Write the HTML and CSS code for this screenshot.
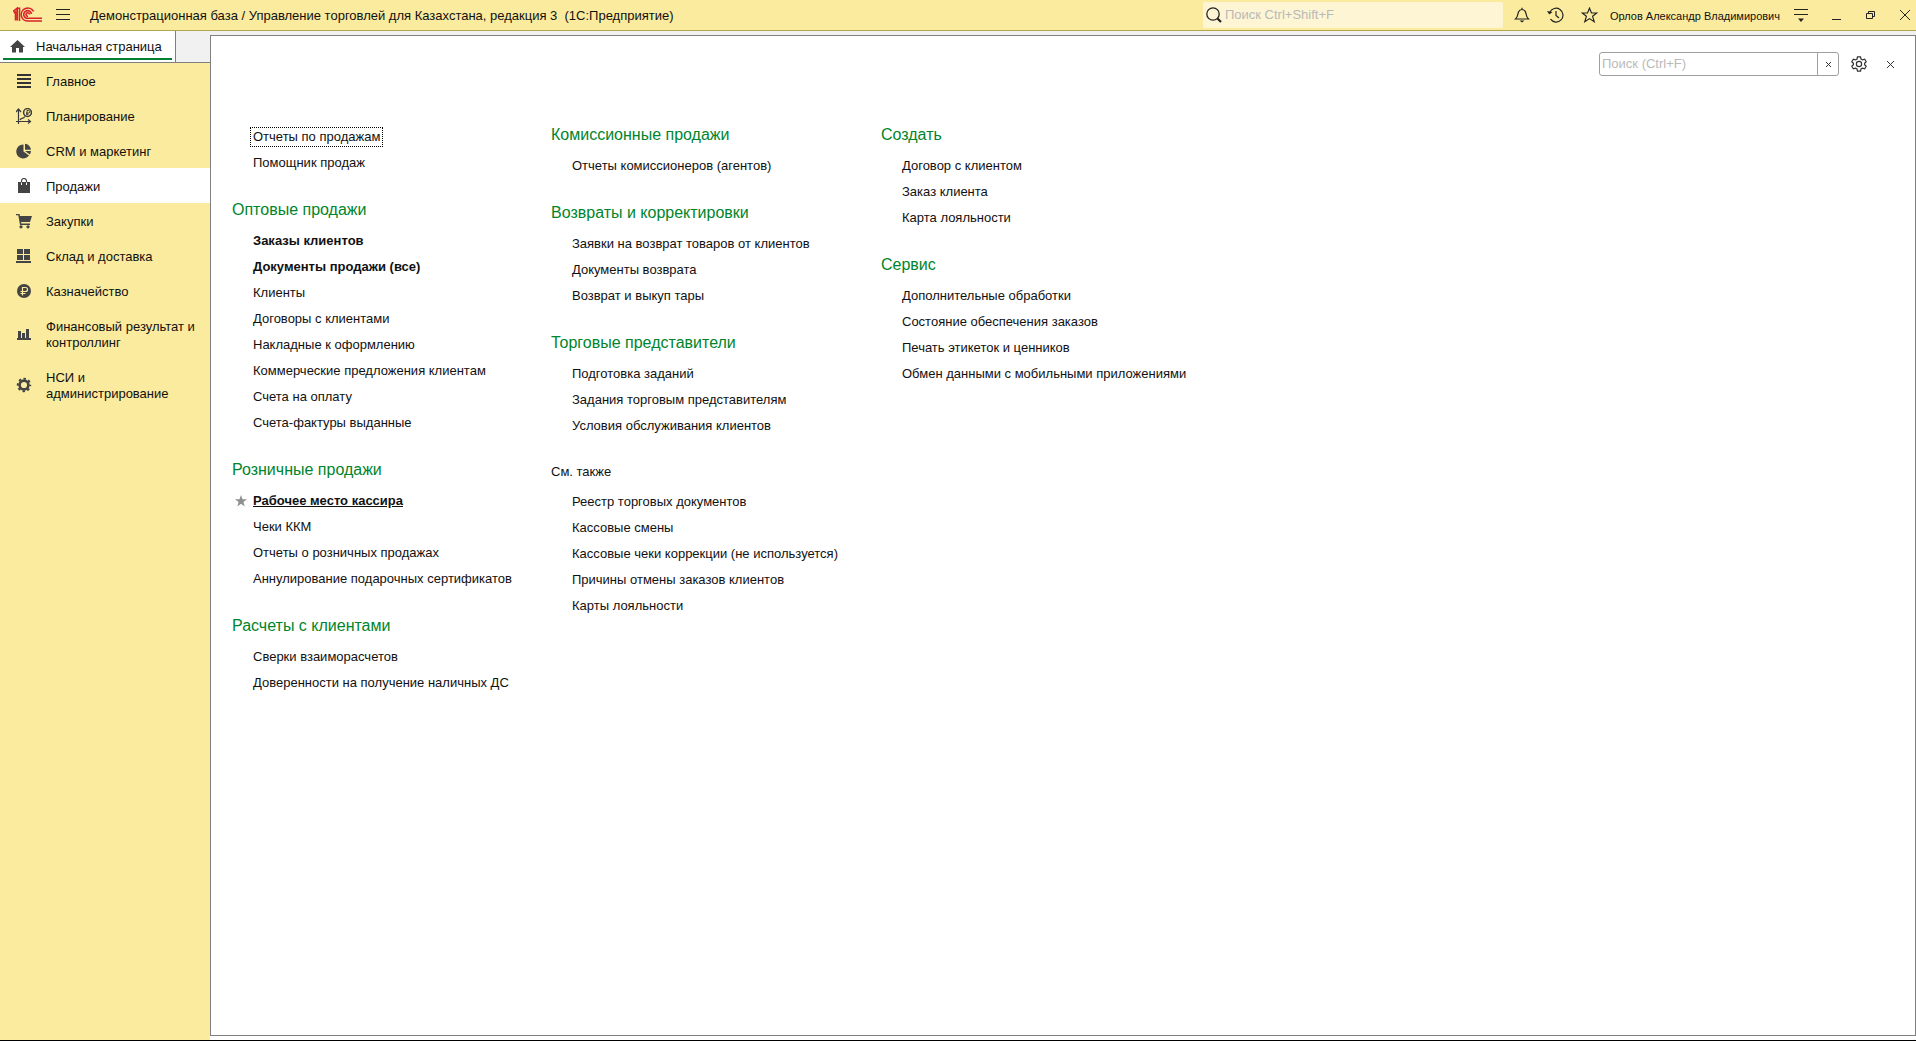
FILE: index.html
```html
<!DOCTYPE html>
<html lang="ru">
<head>
<meta charset="utf-8">
<title>Управление торговлей для Казахстана</title>
<link rel="stylesheet" href="styles.css">
</head>
<body>
<div class="app">
  <header class="titlebar">
    <svg class="logo" width="29" height="16" viewBox="0 0 29 16" fill="none" stroke="#d8232a" stroke-width="1.600"><path d="M0 4.500L4.200 1.200V13.500M1 6L2.500 5V13.500M4.200 1.200H6.500V14"/><path d="M20.500 4.500A6.500 6.500 0 1 0 15.500 14H29"/><path d="M18.500 7A3.900 3.900 0 1 0 15.500 11.300H29"/><path d="M16.500 7.500A1.700 1.700 0 1 0 15 9.200"/></svg>
    <button class="icon-btn burger" aria-label="Меню"><svg width="14" height="12" viewBox="0 0 14 12" stroke="#222" fill="none"><path d="M0 .5H14M0 5.500H14M0 10.500H14"/></svg></button>
    <h1 class="title">Демонстрационная база / Управление торговлей для Казахстана, редакция 3&nbsp; (1С:Предприятие)</h1>
    <label class="top-search">
      <svg width="16" height="16" viewBox="0 0 16 16" fill="none" stroke="#222"><circle cx="7" cy="7" r="6.200" stroke-width="1.300"/><path d="M11.500 11.500L15 15" stroke-width="2.200"/></svg>
      <input type="text" placeholder="Поиск Ctrl+Shift+F" aria-label="Поиск">
    </label>
    <div class="tools">
      <button class="icon-btn" aria-label="Уведомления"><svg width="16" height="16" viewBox="0 0 16 16" fill="none" stroke="#222" stroke-width="1.200"><path d="M1.500 12H14.500C12 10 12.500 7.500 11.500 5C10.800 3.300 9.500 2.500 8 2.500S5.200 3.300 4.500 5C3.500 7.500 4 10 1.500 12Z"/><path d="M8 .8V2.500"/><path d="M5.500 13.500H10.500L8 15.500Z" fill="#222" stroke="none"/></svg></button>
      <button class="icon-btn" aria-label="История"><svg width="17" height="16" viewBox="0 0 17 16" fill="none" stroke="#222" stroke-width="1.200"><path d="M2.800 5.300A6.900 6.900 0 1 1 3.500 12.200"/><path d="M0 4L2.300 7.500L5.500 5Z" fill="#222" stroke="none"/><path d="M9 4V8.500L12 11"/></svg></button>
      <button class="icon-btn" aria-label="Избранное"><svg width="17" height="16" viewBox="0 0 17 16" fill="none" stroke="#222" stroke-width="1.200"><path d="M8.500 1.200L10.500 6H15.800L11.600 9.300L13.200 14.700L8.500 11.600L3.800 14.700L5.400 9.300L1.200 6H6.500Z"/></svg></button>
    </div>
    <span class="user">Орлов Александр Владимирович</span>
    <div class="window-buttons">
      <button class="icon-btn" aria-label="Настройки окна"><svg width="14" height="14" viewBox="0 0 14 14" stroke="#222" fill="none"><path d="M0 1.500H14M0 6.500H14" stroke-width="1.200"/><path d="M4 10.500H10L7 14Z" fill="#222" stroke="none"/></svg></button>
      <button class="icon-btn" aria-label="Свернуть"><svg width="10" height="10" viewBox="0 0 10 10" stroke="#222"><path d="M0 9.500H9"/></svg></button>
      <button class="icon-btn" aria-label="Восстановить"><svg width="10" height="10" viewBox="0 0 10 10" stroke="#222" fill="none"><path d="M.5 3.500H6.500V8.500H.5ZM2.500 3V1.500H8.500V6.500H7"/></svg></button>
      <button class="icon-btn" aria-label="Закрыть"><svg width="10" height="10" viewBox="0 0 10 10" stroke="#222"><path d="M0 0L10 10M10 0L0 10"/></svg></button>
    </div>
  </header>

  <div class="body">
    <div class="left">
      <div class="tabs">
        <a class="tab" href="#home"><svg width="15" height="13" viewBox="0 0 15 13" fill="#444"><path d="M7.500 0L15 7H13V12.500H9V8H6V12.500H2V7H0Z"/></svg><span>Начальная страница</span></a>
      </div>
      <nav class="sections" aria-label="Разделы">
        <a class="section" href="#main"><svg width="16" height="16" viewBox="0 0 16 16" stroke="#333" stroke-width="2"><path d="M1 2H15M1 6H15M1 10H15M1 14H15"/></svg><span>Главное</span></a>
        <a class="section" href="#plan"><svg width="16" height="16" viewBox="0 0 16 16" fill="none" stroke="#3a3a3a" stroke-width="1.200"><path d="M2.500 16V1.500M0 4L2.500 1L5 4M0 13.500H14M12 11.500L14.500 13.500L12 15.500M4 12C5 9.500 7 11.500 9 8.500"/><circle cx="11.500" cy="4.500" r="3.900" stroke-width="1.500"/><path d="M11 7V2.500H12.600A1.200 1.200 0 0 1 12.600 5H10M10 6.200H12.500" stroke-width="1"/></svg><span>Планирование</span></a>
        <a class="section" href="#crm"><svg width="16" height="16" viewBox="0 0 16 16" fill="#444"><path d="M7.500 1.500V8.500L13 12.500A7 7 0 1 1 7.500 1.500Z"/><path d="M9 .8A6.500 6.500 0 0 1 15 6.800H9Z"/><path d="M9 8H15A6.500 6.500 0 0 1 13.800 11.500Z"/></svg><span>CRM и маркетинг</span></a>
        <a class="section current" href="#sales"><svg width="16" height="16" viewBox="0 0 16 16"><path d="M2 4H14V15H2Z" fill="#444"/><path d="M5.500 6.500V3A2.500 2.500 0 0 1 10.500 3V6.500" fill="none" stroke="#444" stroke-width="1.200"/><path d="M5.500 4.500V7M10.500 4.500V7" stroke="#fff"/></svg><span>Продажи</span></a>
        <a class="section" href="#purchases"><svg width="16" height="16" viewBox="0 0 16 16" fill="#444"><path d="M0 1H3.500L4 3H16L14 9H5L5.300 10.500H14V12H4L2.300 2.300H0Z"/><circle cx="5" cy="13.800" r="1.600"/><circle cx="12" cy="13.800" r="1.600"/></svg><span>Закупки</span></a>
        <a class="section" href="#stock"><svg width="16" height="16" viewBox="0 0 16 16" fill="#444"><path d="M1 1H7V6H1ZM8 1H14V6H8ZM1 7H7V12H1ZM8 7H14V12H8ZM0 13H15V15H0Z"/></svg><span>Склад и доставка</span></a>
        <a class="section" href="#treasury"><svg width="16" height="16" viewBox="0 0 16 16"><circle cx="8" cy="8" r="7" fill="#444"/><path d="M6.500 12.500V4.500H9.500A2 2 0 0 1 9.500 8.500H4.500M4.500 10.500H9.500" fill="none" stroke="#fbeb9e" stroke-width="1.200"/></svg><span>Казначейство</span></a>
        <a class="section" href="#finance"><svg width="16" height="16" viewBox="0 0 16 16" fill="#444"><path d="M2 5H5V12H2ZM6 7H9V12H6ZM10 3H13V12H10ZM1 12H15V14H1Z"/></svg><span>Финансовый результат и контроллинг</span></a>
        <a class="section" href="#admin"><svg width="16" height="16" viewBox="0 0 16 16" fill="none" stroke="#444"><circle cx="8" cy="8" r="4.400" stroke-width="2.600"/><circle cx="8" cy="8" r="6.200" stroke-width="2" stroke-dasharray="2.430 2.430" stroke-dashoffset="1.200"/></svg><span>НСИ и администрирование</span></a>
      </nav>
    </div>

    <main class="panel">
      <div class="panel-tools">
        <div class="find">
          <input type="text" placeholder="Поиск (Ctrl+F)" aria-label="Поиск по командам">
          <button aria-label="Очистить"><svg width="5" height="5" viewBox="0 0 5 5" stroke="#333"><path d="M0 0L5 5M5 0L0 5"/></svg></button>
        </div>
        <button class="icon-btn" aria-label="Настройка"><svg width="16" height="16" viewBox="0 0 16 16" fill="none" stroke="#333" stroke-width="1.200"><circle cx="8" cy="8" r="2.600"/><path d="M6.500 .8H9.500L10 3L11.500 3.900L13.700 3.200L15.200 5.800L13.600 7.200V8.800L15.200 10.200L13.700 12.800L11.500 12.100L10 13L9.500 15.200H6.500L6 13L4.500 12.100L2.300 12.800L.8 10.200L2.400 8.800V7.200L.8 5.800L2.300 3.200L4.500 3.900L6 3Z"/></svg></button>
        <button class="icon-btn" aria-label="Закрыть панель"><svg width="7" height="7" viewBox="0 0 7 7" stroke="#333"><path d="M0 0L7 7M7 0L0 7"/></svg></button>
      </div>

      <div class="columns">
        <div class="column">
          <section class="group untitled">
            <ul>
              <li><a class="focused" href="#c1">Отчеты по продажам</a></li>
              <li><a href="#c2">Помощник продаж</a></li>
            </ul>
          </section>
          <section class="group">
            <h2>Оптовые продажи</h2>
            <ul>
              <li><a class="strong" href="#c3">Заказы клиентов</a></li>
              <li><a class="strong" href="#c4">Документы продажи (все)</a></li>
              <li><a href="#c5">Клиенты</a></li>
              <li><a href="#c6">Договоры с клиентами</a></li>
              <li><a href="#c7">Накладные к оформлению</a></li>
              <li><a href="#c8">Коммерческие предложения клиентам</a></li>
              <li><a href="#c9">Счета на оплату</a></li>
              <li><a href="#c10">Счета-фактуры выданные</a></li>
            </ul>
          </section>
          <section class="group">
            <h2>Розничные продажи</h2>
            <ul>
              <li class="starred"><svg class="star" width="12" height="12" viewBox="0 0 12 12" fill="#8f8f8f"><path d="M6 0L7.500 4.200H12L8.400 7L9.700 11.500L6 8.800L2.300 11.500L3.600 7L0 4.200H4.500Z"/></svg><a class="strong underlined" href="#c11">Рабочее место кассира</a></li>
              <li><a href="#c12">Чеки ККМ</a></li>
              <li><a href="#c13">Отчеты о розничных продажах</a></li>
              <li><a href="#c14">Аннулирование подарочных сертификатов</a></li>
            </ul>
          </section>
          <section class="group">
            <h2>Расчеты с клиентами</h2>
            <ul>
              <li><a href="#c15">Сверки взаиморасчетов</a></li>
              <li><a href="#c16">Доверенности на получение наличных ДС</a></li>
            </ul>
          </section>
        </div>

        <div class="column">
          <section class="group">
            <h2>Комиссионные продажи</h2>
            <ul>
              <li><a href="#c17">Отчеты комиссионеров (агентов)</a></li>
            </ul>
          </section>
          <section class="group">
            <h2>Возвраты и корректировки</h2>
            <ul>
              <li><a href="#c18">Заявки на возврат товаров от клиентов</a></li>
              <li><a href="#c19">Документы возврата</a></li>
              <li><a href="#c20">Возврат и выкуп тары</a></li>
            </ul>
          </section>
          <section class="group">
            <h2>Торговые представители</h2>
            <ul>
              <li><a href="#c21">Подготовка заданий</a></li>
              <li><a href="#c22">Задания торговым представителям</a></li>
              <li><a href="#c23">Условия обслуживания клиентов</a></li>
            </ul>
          </section>
          <section class="group">
            <h2 class="also">См. также</h2>
            <ul>
              <li><a href="#c24">Реестр торговых документов</a></li>
              <li><a href="#c25">Кассовые смены</a></li>
              <li><a href="#c26">Кассовые чеки коррекции (не используется)</a></li>
              <li><a href="#c27">Причины отмены заказов клиентов</a></li>
              <li><a href="#c28">Карты лояльности</a></li>
            </ul>
          </section>
        </div>

        <div class="column">
          <section class="group">
            <h2>Создать</h2>
            <ul>
              <li><a href="#c29">Договор с клиентом</a></li>
              <li><a href="#c30">Заказ клиента</a></li>
              <li><a href="#c31">Карта лояльности</a></li>
            </ul>
          </section>
          <section class="group">
            <h2>Сервис</h2>
            <ul>
              <li><a href="#c32">Дополнительные обработки</a></li>
              <li><a href="#c33">Состояние обеспечения заказов</a></li>
              <li><a href="#c34">Печать этикеток и ценников</a></li>
              <li><a href="#c35">Обмен данными с мобильными приложениями</a></li>
            </ul>
          </section>
        </div>
      </div>
    </main>
  </div>
</div>
</body>
</html>
```
FILE: styles.css
```css
* {
  box-sizing: border-box;
}

body {
  margin: 0;
  background: #fff;
  color: #111;
  font: 13px/16px "Liberation Sans", Arial, sans-serif;
}

a {
  color: inherit;
  text-decoration: none;
}

h1,
h2,
ul {
  margin: 0;
  padding: 0;
  font-weight: normal;
  list-style: none;
}

svg {
  display: block;
  flex: none;
}

button {
  display: flex;
  align-items: center;
  justify-content: center;
  padding: 0;
  border: 0;
  background: none;
}

input {
  min-width: 0;
  border: 0;
  outline: 0;
  padding: 0;
  background: none;
  font: 13px/16px "Liberation Sans", Arial, sans-serif;
}

input::placeholder {
  color: #b9b9b9;
  opacity: 1;
}

.app {
  display: flex;
  flex-direction: column;
  min-height: 100vh;
  border-bottom: 1px solid #000;
}

/* Title bar */
.titlebar {
  display: flex;
  align-items: center;
  height: 31px;
  padding: 0 6px 0 13px;
  background: #fbeb9e;
  border-bottom: 1px solid #b3a54a;
}

.burger {
  margin: 0 20px 0 14px;
}

.title {
  flex: 1;
  padding-top: 2px;
  font-size: 13px;
  white-space: nowrap;
}

.top-search {
  display: flex;
  align-items: center;
  gap: 3px;
  width: 300px;
  height: 26px;
  padding: 0 3px;
  border-radius: 2px;
  background: #fdf5d3;
}

.top-search input {
  flex: 1;
}

.tools {
  display: flex;
  gap: 17px;
  margin: 0 12px 0 11px;
}

.user {
  padding-top: 1px;
  font-size: 11px;
}

.window-buttons {
  display: flex;
  align-items: center;
  gap: 24px;
  margin-left: 14px;
}

/* Sections panel */
.body {
  display: flex;
  flex: 1;
}

.left {
  display: flex;
  flex-direction: column;
  width: 210px;
}

.tabs {
  height: 32px;
  background: #f1f1f1;
  border-bottom: 1px solid #808080;
}

.tab {
  display: flex;
  align-items: center;
  gap: 11px;
  width: 176px;
  height: 31px;
  padding-left: 10px;
  background: linear-gradient(#008030, #008030) 3px 27px / 169px 2px no-repeat #fff;
  border-right: 1px solid #808080;
}

.sections {
  flex: 1;
  background: #fbeb9e;
}

.section {
  display: flex;
  align-items: center;
  gap: 14px;
  padding: 9px 10px 8px 16px;
}

.section span {
  padding-top: 2px;
}

.current {
  background: #fff;
}

/* Commands panel */
.panel {
  flex: 1;
  margin: 4px 0 4px;
  border: 1px solid #808080;
  box-shadow: 0 -4px #f1f1f1;
}

.panel-tools {
  display: flex;
  align-items: center;
  justify-content: flex-end;
  height: 56px;
  padding-right: 21px;
}

.panel-tools .icon-btn {
  margin-left: 12px;
}

.panel-tools .icon-btn + .icon-btn {
  margin-left: 20px;
}

.find {
  display: flex;
  width: 240px;
  height: 24px;
  border: 1px solid #a0a0a0;
  border-radius: 3px;
}

.find input {
  flex: 1;
  padding-left: 2px;
}

.find button {
  width: 21px;
  border-left: 1px solid #a0a0a0;
}

.columns {
  display: grid;
  grid-template-columns: 319px 330px auto;
  padding: 29px 21px;
}

.column {
  display: flex;
  flex-direction: column;
  gap: 20px;
}

.untitled {
  padding-top: 3px;
}

.group h2 {
  margin-bottom: 4px;
  color: #00852b;
  font-size: 16px;
  line-height: 28px;
}

.group .also {
  color: #111;
  font-size: 13px;
  line-height: 26px;
}

.group li {
  display: flex;
  align-items: center;
  height: 26px;
  padding-left: 19px;
}

.group li a {
  padding: 1px 2px;
  white-space: nowrap;
}

.group .focused {
  outline: 1px dotted #000;
}

.group .starred {
  gap: 4px;
  padding-left: 3px;
}

.strong {
  font-weight: bold;
}

.underlined {
  text-decoration: underline;
}
```
